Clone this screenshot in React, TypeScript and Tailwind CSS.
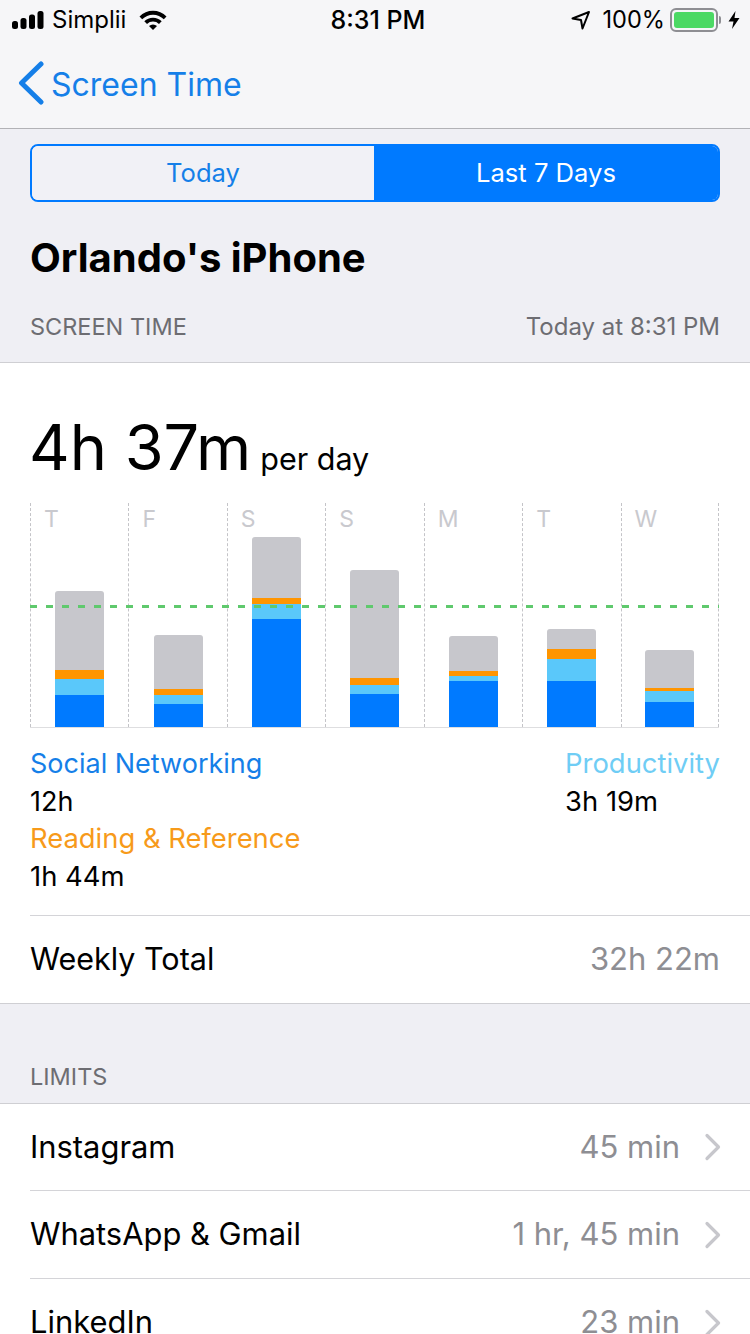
const bars = [
  { day: "T", grey: 79, orange: 9, light: 16, blue: 32 },
  { day: "F", grey: 54, orange: 6, light: 9, blue: 23 },
  { day: "S", grey: 61, orange: 6, light: 15, blue: 108 },
  { day: "S", grey: 108, orange: 7, light: 9, blue: 33 },
  { day: "M", grey: 35, orange: 5, light: 5, blue: 46 },
  { day: "T", grey: 20, orange: 10, light: 22, blue: 46 },
  { day: "W", grey: 38, orange: 3, light: 11, blue: 25 },
];

function Chevron() {
  return (
    <svg width="18" height="28" viewBox="0 0 18 28" fill="none" className="ml-6">
      <path d="M3 2.5 L14.5 14 L3 25.5" stroke="#c7c7cc" strokeWidth="3.2" strokeLinecap="round" strokeLinejoin="round" />
    </svg>
  );
}

function Row({ name, value, h }: { name: string; value: string; h: string }) {
  return (
    <div className={`ml-[30px] flex shrink-0 items-center justify-between border-b border-[#d4d4d8] pr-[28px] ${h}`}>
      <span className="text-[30.9px] text-black">{name}</span>
      <span className="flex items-center text-[31px] text-[#8e8e93]">
        {value}
        <Chevron />
      </span>
    </div>
  );
}

export default function App() {
  return (
    <div
      className="flex h-[1334px] w-[750px] flex-col overflow-hidden bg-[#efeff4] text-black"
      style={{ fontFamily: "Inter, Roboto, 'Liberation Sans', sans-serif" }}
    >
      <div className="h-[129px] shrink-0 border-b border-[#b2b2b6] bg-[#f6f6f8]">
        <div className="flex h-[40px] items-center justify-between pl-[12px] pr-[9px] text-[24px] leading-none">
          <div className="flex w-[260px] items-center">
            <svg width="35" height="20" viewBox="0 0 35 20" className="mr-[5px]">
              <rect x="0" y="11" width="6" height="8" rx="2.5" fill="#000" />
              <rect x="8.5" y="8" width="6" height="11" rx="2.5" fill="#000" />
              <rect x="17" y="4.5" width="6" height="14.5" rx="2.5" fill="#000" />
              <rect x="25.5" y="1" width="6" height="18" rx="2.5" fill="#000" />
            </svg>
            <span>Simplii</span>
            <svg width="30" height="22" viewBox="0 0 30 22" className="ml-[12px]">
              <path d="M1.5 7.5 A19 19 0 0 1 28.5 7.5 L25.8 10.3 A15 15 0 0 0 4.2 10.3 Z" fill="#000" />
              <path d="M6.3 12.2 A12.5 12.5 0 0 1 23.7 12.2 L21 15 A8.6 8.6 0 0 0 9 15 Z" fill="#000" />
              <path d="M11 17 A6 6 0 0 1 19 17 L15 21 Z" fill="#000" />
            </svg>
          </div>
          <span className="ml-[3px] text-[25px] font-medium">8:31 PM</span>
          <div className="flex w-[260px] items-center justify-end">
            <svg width="20" height="20" viewBox="0 0 20 20" fill="none" className="mr-[11px]">
              <path d="M1.5 8.5 L18 2 L11.5 18.5 L10 10 Z" stroke="#000" strokeWidth="2" strokeLinejoin="round" />
            </svg>
            <span className="text-[23.6px]">100%</span>
            <div className="ml-[5px] flex h-[24px] w-[48px] items-center rounded-[6px] border-2 border-[#8e8e93] p-[2px]">
              <div className="h-full w-full rounded-[3px] bg-[#4cd964]" />
            </div>
            <div className="ml-[1px] h-[8px] w-[2px] rounded-r-full bg-[#8e8e93]" />
            <svg width="14" height="20" viewBox="0 0 14 20" className="ml-[6px]">
              <path d="M8.5 1 L1.5 11.5 H6.5 L5 19 L12.5 8 H7.5 Z" fill="#000" />
            </svg>
          </div>
        </div>
        <div className="flex h-[88px] items-center pl-[18px] pt-[2px]">
          <svg width="26" height="44" viewBox="0 0 26 44" fill="none" className="mr-[7px] -translate-y-[2px]">
            <path d="M23 3 L3.5 22 L23 41" stroke="#157fe8" strokeWidth="5" strokeLinecap="round" strokeLinejoin="round" />
          </svg>
          <span className="text-[32px] text-[#157fe8]">Screen Time</span>
        </div>
      </div>

      <div className="px-[30px]">
        <div className="mt-[15px] flex h-[58px] overflow-hidden rounded-[8px] border-2 border-[#007aff] text-[25.6px]">
          <div className="flex w-[342px] items-center justify-center bg-[#f1f1f6] text-[#157fe8]">Today</div>
          <div className="flex flex-1 items-center justify-center bg-[#007aff] text-white">Last 7 Days</div>
        </div>
        <div className="mt-[30px] text-[40px] font-bold leading-[52px]">Orlando's iPhone</div>
        <div className="mt-[27px] flex items-center justify-between leading-[32px] text-[#6d6d72]">
          <span className="text-[23.5px]">SCREEN TIME</span>
          <span className="text-[24px]">Today at 8:31 PM</span>
        </div>
      </div>

      <div className="mt-[19px] h-[642px] shrink-0 border-y border-[#cfcfd3] bg-white">
        <div className="mt-[44px] flex h-[80px] items-baseline pl-[29px] pr-[30px] leading-[80px]">
          <span className="text-[63px]">4h 37m</span>
          <span className="ml-[9px] text-[30.5px]">per day</span>
        </div>
        <div className="ml-[30px] mr-[31px] mt-[16px] h-[225px]">
          <div className="relative grid h-full grid-cols-7 border-b border-[#dedee0]">
            {bars.map((b, i) => (
              <div
                key={i}
                className={`relative flex h-full flex-col items-center justify-end border-l border-dashed border-[#c4c4c8] ${i === 6 ? "border-r" : ""}`}
              >
                <span className="absolute left-[13px] top-[4px] text-[23px] leading-[24px] text-[#c9c9ce]">{b.day}</span>
                <div className="flex w-[49px] flex-col overflow-hidden rounded-t-[3px]">
                  <div className="bg-[#c7c7cc]" style={{ height: b.grey }} />
                  <div className="bg-[#ff9500]" style={{ height: b.orange }} />
                  <div className="bg-[#5ac8fa]" style={{ height: b.light }} />
                  <div className="bg-[#007aff]" style={{ height: b.blue }} />
                </div>
              </div>
            ))}
            <div className="absolute left-0 right-0 top-[102px] h-[3px] bg-[repeating-linear-gradient(90deg,#5fc96d_0_7px,transparent_7px_16px)]" />
          </div>
        </div>
        <div className="flex h-[169px] justify-between px-[30px] pt-[17px] text-[27px] leading-[37.6px]">
          <div>
            <div className="text-[#157fe8]">Social Networking</div>
            <div>12h</div>
            <div className="text-[27.4px] text-[#f79a1a]">Reading &amp; Reference</div>
            <div className="text-[27.4px]">1h 44m</div>
          </div>
          <div className="text-[27.4px]">
            <div className="text-[#6fcdf5]">Productivity</div>
            <div>3h 19m</div>
          </div>
        </div>
        <div className="ml-[30px] mt-[18px] flex h-[87px] items-center justify-between border-t border-[#d4d4d8] pr-[30px]">
          <span className="text-[30.5px]">Weekly Total</span>
          <span className="text-[31px] text-[#8e8e93]">32h 22m</span>
        </div>
      </div>

      <div className="flex h-[99px] shrink-0 items-end px-[30px] pb-[10px] text-[23.5px] leading-[32px] text-[#6d6d72]">LIMITS</div>
      <div className="flex-1 border-t border-[#cfcfd3] bg-white">
        <Row name="Instagram" value="45 min" h="h-[87px]" />
        <Row name="WhatsApp & Gmail" value="1 hr, 45 min" h="h-[88px]" />
        <Row name="LinkedIn" value="23 min" h="h-[88px]" />
      </div>
    </div>
  );
}
